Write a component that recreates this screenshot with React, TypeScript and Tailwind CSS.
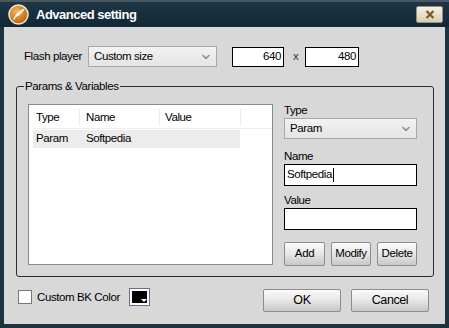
import { ChevronDown } from "lucide-react";

const FONT = { fontFamily: '"Liberation Sans", Arial, sans-serif' };

function Chevron() {
  return <ChevronDown size={12} strokeWidth={3} className="text-[#8a8a8a]" />;
}

function Select({ value, className }: { value: string; className: string }) {
  return (
    <div
      className={`flex items-center justify-between border border-[#a8a8a8] bg-gradient-to-b from-[#f2f2f2] to-[#e4e4e4] pl-[5px] pr-[4px] text-black ${className}`}
    >
      <span>{value}</span>
      <Chevron />
    </div>
  );
}

function Btn({ label, className }: { label: string; className: string }) {
  return (
    <div
      className={`flex items-center justify-center rounded-[2px] border border-[#8c8c8c] bg-gradient-to-b from-[#fbfbfb] via-[#e6e6e6] to-[#c8c8c8] text-black ${className}`}
    >
      {label}
    </div>
  );
}

export default function App() {
  return (
    <div style={FONT} className="flex h-[328px] w-[449px] flex-col bg-[#1c3340]">
      {/* Title bar */}
      <div className="flex h-[27px] items-center border-t-2 border-[#4a5861] bg-gradient-to-b from-[#1f3644] to-[#102737] pl-[8px] pr-[6px]">
        <svg width="21" height="21" viewBox="0 0 21 21">
          <defs>
            <radialGradient id="ic" cx="40%" cy="35%" r="70%">
              <stop offset="0%" stopColor="#f7b45a" />
              <stop offset="100%" stopColor="#b85c10" />
            </radialGradient>
          </defs>
          <circle cx="10.5" cy="10.5" r="9.5" fill="url(#ic)" stroke="#f1e6d0" strokeWidth="1.6" />
          <path d="M6 15 C8 11, 10 8, 15 6 C13 9, 11 11, 8 12" stroke="#fff3e0" strokeWidth="1.5" fill="none" strokeLinecap="round" />
        </svg>
        <span className="ml-[7px] text-[13px] font-bold tracking-[-0.5px] text-white">Advanced setting</span>
        <div className="ml-auto flex h-[17px] w-[27px] items-center justify-center rounded-[2px] border border-[#9c9078] bg-gradient-to-b from-[#f6f1e4] to-[#d8ceb6]">
          <svg width="10" height="9" viewBox="0 0 10 9">
            <path d="M1.5 1 L8.5 8 M8.5 1 L1.5 8" stroke="#7a5a20" strokeWidth="2.2" />
          </svg>
        </div>
      </div>

      {/* Content */}
      <div className="mx-[4px] mb-[4px] flex flex-1 flex-col bg-[#d8d8d8] pl-[12px] pt-[19px] text-[11.5px] tracking-[-0.4px] text-black">
        {/* Flash player row */}
        <div className="flex h-[21px] items-center">
          <span className="ml-[8px] w-[64px] whitespace-nowrap">Flash player</span>
          <Select value="Custom size" className="h-[21px] w-[129px]" />
          <div className="ml-[15px] flex h-[20px] w-[52px] items-center justify-end border border-black bg-white pr-[2px]">640</div>
          <span className="ml-[9px] w-[12px] text-[#333]">x</span>
          <div className="flex h-[20px] w-[54px] items-center justify-end border border-black bg-white pr-[2px]">480</div>
        </div>

        {/* Params group */}
        <div className="relative mt-[19px] flex h-[191px] w-[418px] rounded-[3px] border border-[#2e2e2e] pl-[11px] pt-[17px]">
          <span className="absolute left-[7px] top-[-8px] bg-[#d8d8d8] px-[1px] leading-[14px]">Params &amp; Variables</span>

          <div className="h-[161px] w-[245px] border border-[#8a8a8a] bg-white pl-[4px] pt-[2px]">
            <div className="flex h-[22px] items-center border-b border-[#eeeeee]">
              <span className="w-[47px] border-r border-[#ececec] pl-[3px]">Type</span>
              <span className="w-[80px] border-r border-[#ececec] pl-[6px]">Name</span>
              <span className="w-[81px] border-r border-[#ececec] pl-[5px]">Value</span>
            </div>
            <div className="mt-[1px] flex h-[18px] w-[207px] items-center bg-[#ececec]">
              <span className="w-[47px] pl-[3px]">Param</span>
              <span className="w-[80px] pl-[6px]">Softpedia</span>
            </div>
          </div>

          <div className="ml-[11px] flex w-[133px] flex-col">
            <span className="mt-[-2px] leading-[16px]">Type</span>
            <Select value="Param" className="h-[21px] w-[133px]" />
            <span className="mt-[9px] leading-[16px]">Name</span>
            <div className="flex h-[22px] items-center border border-black bg-white pl-[2px]">
              Softpedia<span className="ml-[1px] h-[14px] w-[1px] bg-black" />
            </div>
            <span className="mt-[6px] leading-[16px]">Value</span>
            <div className="h-[22px] border border-black bg-white" />
            <div className="mt-[12px] flex gap-[6px]">
              <Btn label="Add" className="h-[24px] w-[41px]" />
              <Btn label="Modify" className="h-[24px] w-[40px]" />
              <Btn label="Delete" className="h-[24px] w-[40px]" />
            </div>
          </div>
        </div>

        {/* Bottom row */}
        <div className="mt-[12px] flex items-start">
          <div className="flex w-[247px] items-start">
            <div className="ml-[2px] mt-[1px] h-[14px] w-[14px] border border-[#777] bg-white" />
            <span className="ml-[5px] w-[92px] whitespace-nowrap">Custom BK Color</span>
            <div className="relative mt-[-1px] h-[18px] w-[21px] border border-[#6e6e8a] bg-white p-[2px]">
              <div className="h-full w-full bg-black" />
              <svg className="absolute bottom-[2px] right-[2px]" width="6" height="4" viewBox="0 0 6 4">
                <path d="M0 0 H6 L3 3 Z" fill="#fff" />
              </svg>
            </div>
          </div>
          <Btn label="OK" className="h-[23px] w-[78px] text-[12.5px]" />
          <Btn label="Cancel" className="ml-[10px] h-[23px] w-[78px] text-[12.5px]" />
        </div>
      </div>
    </div>
  );
}
